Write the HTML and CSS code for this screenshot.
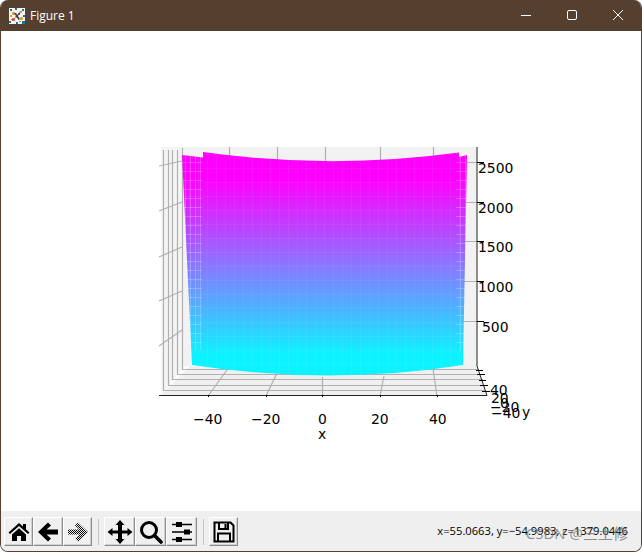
FILE: index.html
```html
<!DOCTYPE html>
<html lang="en">
<head>
<meta charset="utf-8">
<title>Figure 1</title>
<link rel="stylesheet" href="styles.css">
</head>
<body>
<div class="window">
  <header class="titlebar">
    <svg class="app-icon" width="16" height="16" viewBox="0 0 16 16">
      <rect width="16" height="16" fill="#f6f6f6"/>
      <path d="M1 1h2v2H1zM6 0h2v2H6zM13 1h2v2h-2zM0 13h2v2H0zM13 13h3v3h-3zM7 14h2v2H7zM14 7h2v2h-2z" fill="#1f6f9f"/>
      <path d="M3 4h3v3H3zM10 3h3v2h-3zM11 9h3v3h-3zM1 7h2v2H1z" fill="#d8a24a"/>
      <path d="M3 10h3v3H3zM9 5h2v2H9z" fill="#c9653c"/>
      <path d="M5 5l2 0 4 6-1.500 1zM10 5h1.500L7 10 6 9z" fill="#444"/>
      <path d="M12 3h1v1h-1zM2 11h1v1H2zM10 13h2v1h-2z" fill="#7a9a5a"/>
    </svg>
    <span class="title">Figure 1</span>
    <div class="controls">
      <svg class="control" width="46" height="30" viewBox="0 0 46 30"><path d="M18 15.500h10" stroke="#fff" fill="none"/></svg>
      <svg class="control" width="46" height="30" viewBox="0 0 46 30"><rect x="18.500" y="10.500" width="9" height="9" rx="1.500" stroke="#fff" fill="none"/></svg>
      <svg class="control" width="46" height="30" viewBox="0 0 46 30"><path d="M18 10l10 10M28 10L18 20" stroke="#fff" fill="none"/></svg>
    </div>
  </header>

  <main class="canvas">
    <svg class="plot" width="640" height="480" viewBox="1 31 640 480">
      <defs>
        <linearGradient id="cool" gradientUnits="userSpaceOnUse" x1="0" y1="180" x2="0" y2="355">
          <stop offset="0" stop-color="#ff00ff"/>
          <stop offset="1" stop-color="#0cf3ff"/>
        </linearGradient>
        <pattern id="mesh" width="5" height="9" patternUnits="userSpaceOnUse">
          <path d="M0.500 0v9M0 .5h5" stroke="#fff" stroke-opacity=".22" fill="none"/>
        </pattern>
        <pattern id="mesh-fine" width="9" height="14" patternUnits="userSpaceOnUse">
          <path d="M0.500 0v14M0 .5h9" stroke="#fff" stroke-opacity=".05" fill="none"/>
        </pattern>
        <clipPath id="left-strip"><rect x="182" y="150" width="20" height="200"/></clipPath>
        <clipPath id="right-strip"><rect x="456" y="150" width="12" height="200"/></clipPath>
      </defs>

      <path class="pane-back" d="M161 147H477V366H161Z"/>
      <path class="pane-side" d="M161 148L182 147V370L161 395Z"/>
      <path class="pane-floor" d="M161 395L190 366H477L487 395Z"/>

      <g class="grid">
        <path d="M229.500 147V160M277.500 147V165M325.500 147V165M380.500 147V165M433.500 147V160"/>
        <path d="M163.500 150V390M168.500 150V385M172.500 150V380M177.500 150V375M182.500 148V370"/>
        <path d="M159 166L182 161M159 211L182 202M159 257L182 247M159 301L182 291M159 346L182 330"/>
        <path d="M163 390.500H486M168 385.500H484M172 379.500H483M177 374.500H481M182 369.500H479"/>
        <path d="M208 396L227 370M266 396L277 373M322.500 396V377M380 396L384 376M437 396L433 369"/>
        <path d="M460 162.500H477M460 202.500H477M460 241.500H477M460 281.500H477M460 321.500H477"/>
      </g>

      <path id="surface" class="surface" d="M182 155L203 157.500V152Q330 170 459 152.500V157L467 155L463 365Q330 386 192 365Z"/>
      <path class="surface-mesh" d="M182 155L203 157.500V152Q330 170 459 152.500V157L467 155L463 365Q330 386 192 365Z"/>
      <path class="surface-edge" clip-path="url(#left-strip)" d="M182 155L203 157.500V350H187Z"/>
      <path class="surface-edge" clip-path="url(#right-strip)" d="M456 153L467 155L464 350H456Z"/>

      <g class="axis">
        <path d="M159 395.500H487L477 366V147"/>
      </g>
      <g class="ticks">
        <path d="M477 162.500H484M477 202.500H484M477 241.500H484M477 281.500H484M477 321.500H484"/>
        <path d="M476 370.500H483M477 374.500H485M479 380.500H486M480 385.500H488M482 391.500H490"/>
        <path d="M208.500 395v2M266.500 395v2M322.500 395v2M380.500 395v2M437.500 395v2"/>
      </g>

      <g class="labels">
        <text x="478" y="173">2500</text>
        <text x="478" y="213">2000</text>
        <text x="478" y="252">1500</text>
        <text x="478" y="292">1000</text>
        <text x="482" y="332">500</text>
        <text x="193" y="424">−40</text>
        <text x="251" y="424">−20</text>
        <text x="318" y="424">0</text>
        <text x="371" y="424">20</text>
        <text x="429" y="424">40</text>
        <text x="318" y="439">x</text>
        <text x="490" y="395">40</text>
        <text x="491" y="403">20</text>
        <text x="500" y="408">0</text>
        <text x="490" y="412">−20</text>
        <text x="491" y="418">−40</text>
        <text x="522" y="417">y</text>
      </g>
    </svg>
  </main>

  <footer class="toolbar">
    <button class="tool tool-narrow" type="button" aria-label="Home">
      <svg width="22" height="22" viewBox="0 0 22 22"><path d="M11 2L0.500 11.500 2 13l9-8 9 8 1.500-1.500L18 8.300V3h-3v2.600Z M4 13.500L11 7.200l7 6.300V20h-5v-5H9v5H4Z" fill="#000"/></svg>
    </button>
    <button class="tool tool-mid" type="button" aria-label="Back">
      <svg width="22" height="22" viewBox="0 0 22 22"><path d="M1 11L11 1.500l3 3L9.500 8.500H21v5H9.500L14 17.500l-3 3Z" fill="#000"/></svg>
    </button>
    <button class="tool tool-narrow" type="button" aria-label="Forward">
      <svg width="22" height="22" viewBox="0 0 22 22"><defs><pattern id="dither" width="2" height="2" patternUnits="userSpaceOnUse"><path d="M0 0h1v1H0zM1 1h1v1H1z" fill="#000"/></pattern></defs><path d="M21 11L11 1.500l-3 3L12.500 8.500H1v5H12.500L8 17.500l3 3Z" fill="url(#dither)"/></svg>
    </button>
    <span class="sep"></span>
    <button class="tool tool-wide" type="button" aria-label="Pan">
      <svg width="26" height="26" viewBox="0 0 26 26"><path d="M13 1l4.500 5H15v5.500h5.500V9l5 4-5 4v-2.500H15V20h2.500L13 25l-4.500-5H11v-5.500H5.500V17l-5-4 5-4v2.500H11V6H8.500Z" fill="#000"/></svg>
    </button>
    <button class="tool tool-wide" type="button" aria-label="Zoom">
      <svg width="24" height="24" viewBox="0 0 24 24"><circle cx="10" cy="10" r="7.500" fill="none" stroke="#000" stroke-width="3"/><path d="M15.500 15.500L22 22" stroke="#000" stroke-width="3.600" stroke-linecap="round"/></svg>
    </button>
    <button class="tool tool-wide" type="button" aria-label="Configure">
      <svg width="24" height="24" viewBox="0 0 24 24"><path d="M2 4.500h20M2 12h20M2 19.500h20" stroke="#000" stroke-width="1.500"/><path d="M6 2h6v5H6zM14 9.500h6v5h-6zM6 17h6v5H6z" fill="#000"/></svg>
    </button>
    <span class="sep"></span>
    <button class="tool tool-narrow" type="button" aria-label="Save">
      <svg width="22" height="22" viewBox="0 0 22 22"><path d="M2 1.500h15.500l3 3V20.500H1.500V1.500Z" fill="none" stroke="#000" stroke-width="2"/><path d="M6 2v6h9V2" fill="none" stroke="#000" stroke-width="2"/><path d="M11.500 3h2v4h-2z" fill="#000"/><path d="M5 20v-7.500h12V20" fill="none" stroke="#000" stroke-width="2"/></svg>
    </button>
    <div class="status">
      <span class="coords">x=55.0663, y=−54.9983, z=1379.0446</span>
      <span class="watermark">CSDN @三土修</span>
    </div>
  </footer>
</div>
</body>
</html>
```

FILE: styles.css
```css
* { box-sizing: border-box; }

html, body {
  margin: 0;
  padding: 0;
  background: #fff;
}

.window {
  width: 642px;
  height: 552px;
  display: flex;
  flex-direction: column;
  overflow: hidden;
  border: 1px solid #553f2e;
  border-top: 0;
  border-radius: 8px;
  background: #fff;
  font-family: "Open Sans", "Noto Sans", sans-serif;
}

.titlebar {
  flex: 0 0 31px;
  display: flex;
  align-items: center;
  padding-left: 8px;
  background: #553f2e;
  color: #fff;
}

.app-icon { flex: none; }

.title {
  margin-left: 5px;
  font-size: 12px;
}

.controls {
  display: flex;
  margin-left: auto;
  margin-top: -1px;
}

.control { display: block; }

.canvas {
  flex: 1 1 auto;
  min-height: 0;
  background: #fff;
}

.plot { display: block; }

.pane-back { fill: #f2f2f2; }
.pane-side { fill: #f4f4f4; }
.pane-floor { fill: #f0f0f0; }

.grid path {
  fill: none;
  stroke: #b0b0b0;
  stroke-width: 1.2;
}

.surface { fill: url(#cool); }
.surface-mesh { fill: url(#mesh-fine); }
.surface-edge { fill: url(#mesh); }

.axis path,
.ticks path {
  fill: none;
  stroke: #000;
  stroke-width: 1;
}

.axis path { stroke: #222; }

.labels text {
  font-family: "DejaVu Sans", sans-serif;
  font-size: 13.9px;
  fill: #000;
}

.toolbar {
  flex: 0 0 40px;
  display: flex;
  align-items: flex-start;
  padding: 6px 4px 0 3px;
  background: #efefef;
}

.tool {
  flex: none;
  display: flex;
  align-items: center;
  justify-content: center;
  height: 29px;
  padding: 0;
  background: #f0f0f0;
  border: 1px solid;
  border-color: #fff #8c8c8c #8c8c8c #fff;
  box-shadow: inset -1px -1px 0 #d0d0d0;
}

.tool-narrow { width: 29px; }
.tool-mid { width: 30px; }
.tool-wide { width: 31px; }

.sep {
  flex: none;
  width: 1px;
  height: 26px;
  margin: 2px 5px 0 6px;
  background: #c4c4c4;
}

.status {
  position: relative;
  margin-left: auto;
  padding-right: 9px;
  margin-top: 4px;
  white-space: nowrap;
  line-height: 16px;
}

.coords {
  font-size: 11.2px;
  color: #000;
}

.watermark {
  position: absolute;
  right: 9px;
  top: 3px;
  font-size: 15px;
  line-height: 18px;
  color: rgba(110, 110, 110, 0.75);
  font-family: "Open Sans", "Noto Sans CJK SC", sans-serif;
}
```
